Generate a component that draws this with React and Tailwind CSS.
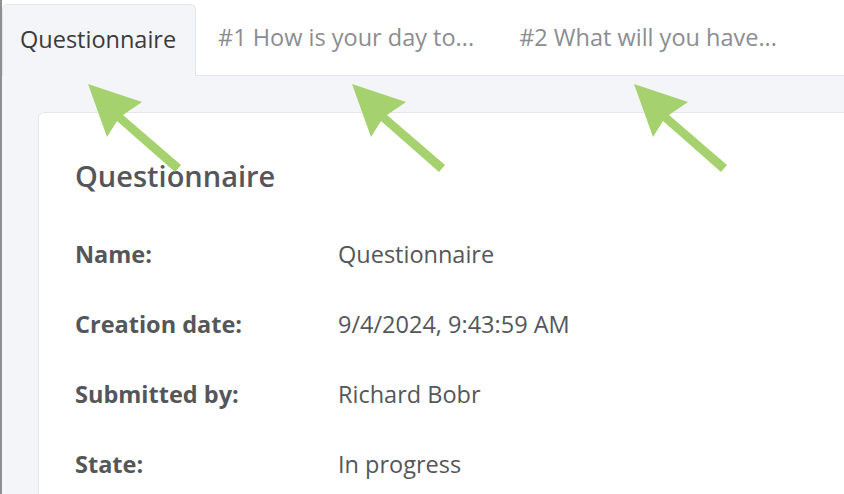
import React from "react";

function Arrow({ x, y }) {
  return (
    <svg
      className="absolute"
      style={{ left: x, top: y }}
      width="100"
      height="95"
      viewBox="0 0 100 95"
    >
      <polygon
        points="0,0 54,18 35,31 93,81 87,88 29,37 19,53"
        fill="#a5d16f"
      />
    </svg>
  );
}

function Row({ label, value }) {
  return (
    <div className="flex items-center h-[70px]">
      <div className="w-[263px] font-bold text-[23.5px] text-[#555659]">{label}</div>
      <div className="text-[23.5px] text-[#555659]">{value}</div>
    </div>
  );
}

export default function App() {
  return (
    <div
      className="relative w-[844px] h-[494px] overflow-hidden bg-white border-l-2 border-[#8f8f8f] flex flex-col"
      style={{ fontFamily: '"Open Sans", "Noto Sans", sans-serif' }}
    >
      <div className="flex items-end h-[76px] border-b border-[#e3e5ea] shrink-0">
        <div className="h-[72px] w-[194px] -mb-px bg-[#f4f5f9] border border-b-0 border-[#e3e5ea] rounded-t-md flex items-center pb-[2px] pl-[17px] text-[23.5px] text-[#3a3a3c]">
          Questionnaire
        </div>
        <div className="h-[72px] flex items-center pb-[2px] pl-[22px] text-[23.5px] text-[#8c8d90]">
          #1 How is your day to...
        </div>
        <div className="h-[72px] flex items-center pb-[2px] pl-[45px] text-[23.5px] text-[#8c8d90]">
          #2 What will you have...
        </div>
      </div>
      <div className="flex-1 bg-[#f4f5f9] pl-[36px] pt-[36px]">
        <div className="bg-white border border-r-0 border-[#e6e8ec] rounded-l-md h-full pl-[36px] pt-[43px]">
          <div className="text-[29px] font-semibold text-[#555659] leading-[40px] mb-[24px]">
            Questionnaire
          </div>
          <Row label="Name:" value="Questionnaire" />
          <Row label="Creation date:" value="9/4/2024, 9:43:59 AM" />
          <Row label="Submitted by:" value="Richard Bobr" />
          <Row label="State:" value="In progress" />
        </div>
      </div>
      <Arrow x={86} y={84} />
      <Arrow x={350} y={84} />
      <Arrow x={632} y={84} />
    </div>
  );
}
